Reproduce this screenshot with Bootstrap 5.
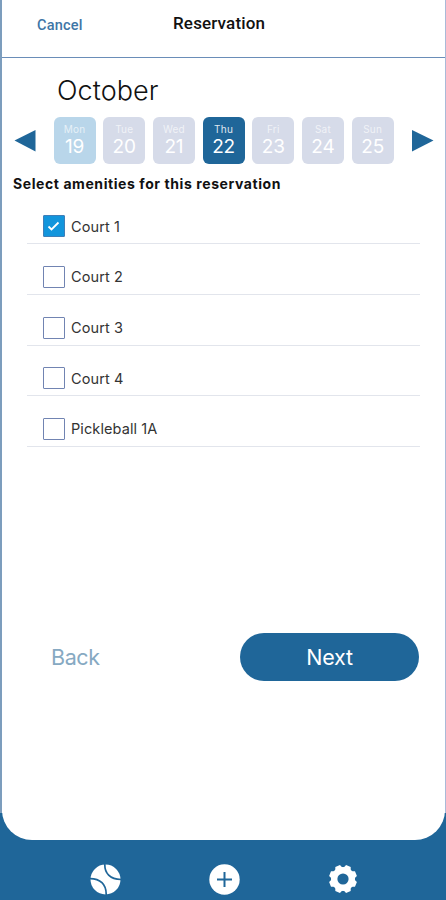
<!DOCTYPE html>
<html lang="en">
<head>
<meta charset="utf-8">
<meta name="viewport" content="width=device-width, initial-scale=1">
<title>Reservation</title>
<link href="https://cdn.jsdelivr.net/npm/bootstrap@5.3.0/dist/css/bootstrap.min.css" rel="stylesheet">
<style>
:root { --brand: #1f6699; }
body { font-family: Inter, "Liberation Sans", sans-serif; background: var(--brand); color: #111; }
.app { height: 900px; background: linear-gradient(90deg, #7c9dbd 2px, #fff 2px, #fff 445px, #a9bad8 445px) 0 0 / 100% 813px no-repeat; }
.sheet { height: 840px; margin: 0 1px 0 2px; border-radius: 0 0 30px 30px; background: #fff; }
.topbar { height: 58px; border-bottom: 1px solid #6a8db8; font-family: Roboto, sans-serif; padding: 13px 0 0 35px; }
.cancel { width: 136px; font-size: 14.5px; line-height: 26px; color: #3e76a6; letter-spacing: .2px; font-weight: 500; text-decoration: none; }
.title { font-size: 17px; line-height: 21px; font-weight: 500; letter-spacing: .16px; }
.month { font-size: 27px; line-height: 36px; margin: 15px 0 0 55px; font-weight: 300; letter-spacing: .08px; }
.week { margin-top: 8px; height: 47px; padding: 0 11px 0 12px; }
.days { gap: 7.7px; margin-left: 17.5px; }
.day { width: 42px; height: 47px; border-radius: 6px; background: #d6dbe9; color: #fff; padding-top: 5px; }
.day small { font-size: 10px; line-height: 14px; opacity: .65; letter-spacing: .2px; }
.day span { font-size: 19px; line-height: 22px; letter-spacing: -.2px; }
.day.today { background: #b9d6ea; }
.day.active { background: var(--brand); }
.day.active small { opacity: .85; }
.prompt { font-size: 14px; line-height: 20px; font-weight: 700; margin: 10px 0 0 11px; color: #111; letter-spacing: .58px; }
.amenities { margin: -.4px 25px 0; }
.amenity { height: 50.7px; border-bottom: 1px solid #e2e5ec; padding: 0 0 6px 16px; gap: 6px; font-size: 14.5px; color: #333; letter-spacing: .1px; }
.amenity .form-check-input { width: 22px; height: 22px; border: 1px solid #7184b2; border-radius: 1px; }
.amenity .form-check-input:checked { background-color: #1295dc; border-color: #3f7fb8; background-size: 20px; background-image: url("data:image/svg+xml,%3csvg xmlns='http://www.w3.org/2000/svg' viewBox='0 0 20 20'%3e%3cpath fill='none' stroke='%23fff' stroke-width='1.8' d='m4.5 10.5 3 3 7-7'/%3e%3c/svg%3e"); }
.actions { margin: auto 26px 159px 49px; }
.back { font-size: 21.5px; color: #86a9c2; font-weight: 400; letter-spacing: -.4px; text-decoration: none; }
.next { width: 179px; height: 48px; font-size: 21.5px; background: var(--brand); color: #fff; padding: 0; letter-spacing: -.2px; }
.tabs { height: 60px; padding: 24px 88px 0 90px; }
</style>
</head>
<body>
<div class="app overflow-hidden">
  <main class="sheet d-flex flex-column">
    <header class="topbar d-flex align-items-start">
      <a class="cancel" href="#">Cancel</a>
      <h1 class="title mb-0">Reservation</h1>
    </header>
    <h2 class="month mb-0">October</h2>
    <div class="week d-flex align-items-center">
      <svg width="22" height="22" viewBox="0 0 22 22"><path d="M.5 10.500 21.500 0v21.500z" fill="#1f6699"/></svg>
      <div class="days d-flex">
        <div class="day today d-flex flex-column align-items-center"><small>Mon</small><span>19</span></div>
        <div class="day d-flex flex-column align-items-center"><small>Tue</small><span>20</span></div>
        <div class="day d-flex flex-column align-items-center"><small>Wed</small><span>21</span></div>
        <div class="day active d-flex flex-column align-items-center"><small>Thu</small><span>22</span></div>
        <div class="day d-flex flex-column align-items-center"><small>Fri</small><span>23</span></div>
        <div class="day d-flex flex-column align-items-center"><small>Sat</small><span>24</span></div>
        <div class="day d-flex flex-column align-items-center"><small>Sun</small><span>25</span></div>
      </div>
      <svg class="ms-auto" width="22" height="22" viewBox="0 0 22 22"><path d="M21.500 10.500 0 0v21.500z" fill="#1f6699"/></svg>
    </div>
    <p class="prompt mb-0">Select amenities for this reservation</p>
    <div class="amenities">
      <label class="amenity d-flex align-items-end"><input class="form-check-input m-0" type="checkbox" checked>Court 1</label>
      <label class="amenity d-flex align-items-end"><input class="form-check-input m-0" type="checkbox">Court 2</label>
      <label class="amenity d-flex align-items-end"><input class="form-check-input m-0" type="checkbox">Court 3</label>
      <label class="amenity d-flex align-items-end"><input class="form-check-input m-0" type="checkbox">Court 4</label>
      <label class="amenity d-flex align-items-end"><input class="form-check-input m-0" type="checkbox">Pickleball 1A</label>
    </div>
    <div class="actions d-flex justify-content-between align-items-center">
      <a class="back" href="#">Back</a>
      <button class="next btn rounded-pill" type="button">Next</button>
    </div>
  </main>
  <nav class="tabs d-flex justify-content-between align-items-start">
    <svg width="31" height="31" viewBox="0 0 31 31"><circle cx="15.5" cy="15.5" r="15" fill="#fff"/><path d="M14.8 0C14.5 9 20 15.5 31 15.5M0 14.6c10 0 16.5 5.500 16.200 16.400" fill="none" stroke="#1f6699" stroke-width="1.700"/></svg>
    <svg width="31" height="31" viewBox="0 0 31 31"><circle cx="15.500" cy="15.500" r="15.200" fill="#fff"/><path d="M15.500 8v15M8 15.500h15" stroke="#1f6699" stroke-width="2"/></svg>
    <svg width="30" height="30" viewBox="0 0 30 30"><g fill="#fff" transform="rotate(22.500 15 15)"><circle cx="15" cy="15" r="12"/><g id="t"><path id="a" d="M11.200 4 12.500 1h5l1.300 3v22l-1.300 3h-5l-1.300-3z"/><use href="#a" transform="rotate(90 15 15)"/></g><use href="#t" transform="rotate(45 15 15)"/></g><circle cx="15" cy="15" r="5.600" fill="#1f6699"/></svg>
  </nav>
</div>
<script src="https://cdn.jsdelivr.net/npm/bootstrap@5.3.0/dist/js/bootstrap.bundle.min.js"></script>
</body>
</html>
